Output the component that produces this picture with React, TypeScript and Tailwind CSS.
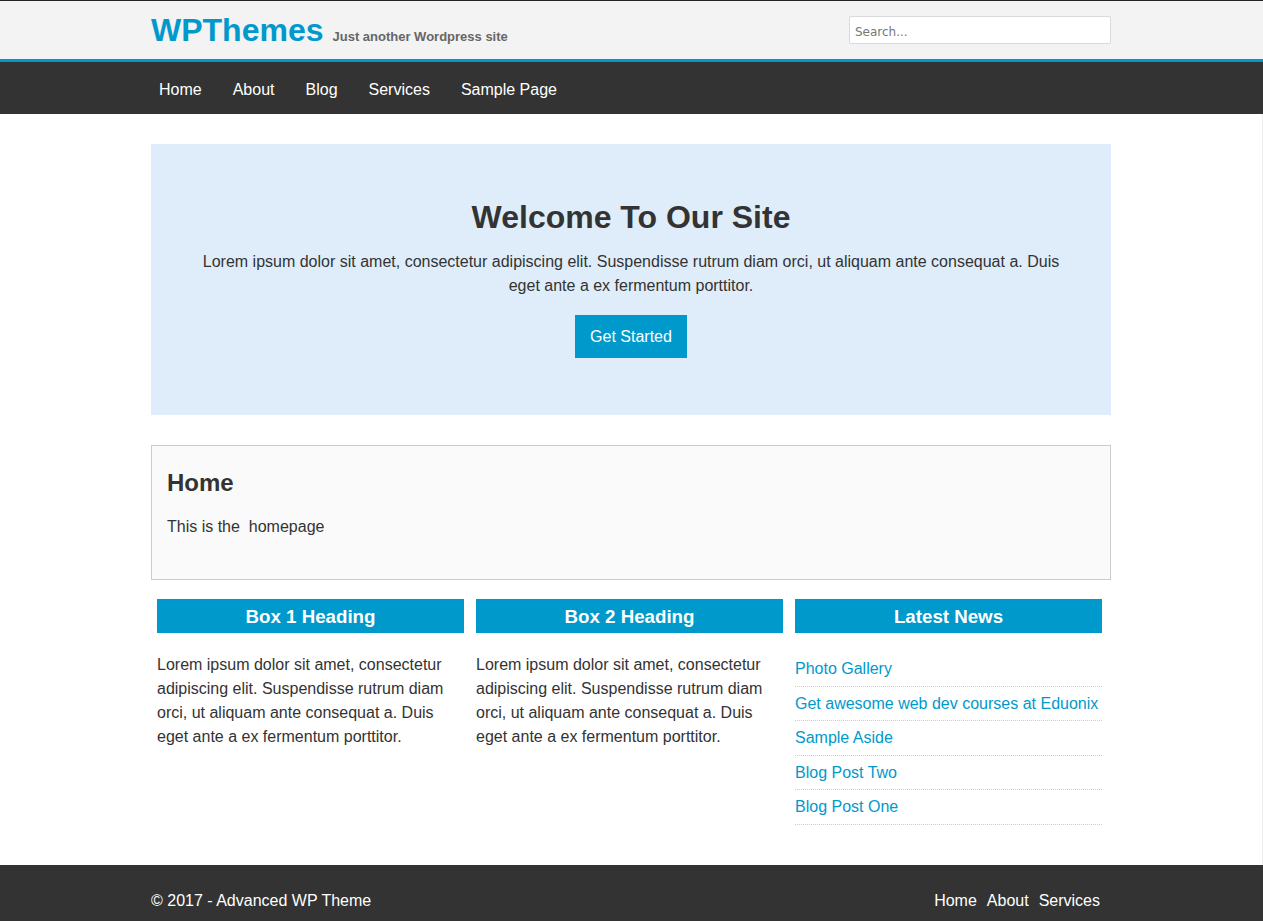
import React from "react";

const navLinks = ["Home", "About", "Blog", "Services", "Sample Page"];
const newsLinks = [
  "Photo Gallery",
  "Get awesome web dev courses at Eduonix",
  "Sample Aside",
  "Blog Post Two",
  "Blog Post One",
];
const lorem =
  "Lorem ipsum dolor sit amet, consectetur adipiscing elit. Suspendisse rutrum diam orci, ut aliquam ante consequat a. Duis eget ante a ex fermentum porttitor.";

export default function App() {
  return (
    <div className="min-h-screen bg-white text-[#333] font-['Liberation_Sans',Arial,sans-serif]">
      {/* Header */}
      <header className="border-t border-t-[#222] border-b-[3px] border-b-[#0099cc] bg-[#f3f3f3] pr-px">
        <div className="mx-auto flex h-[58px] w-[960px] items-center justify-between">
          <div className="flex items-baseline">
            <h1 className="text-[32px] font-bold leading-[37px] text-[#0099cc]">WPThemes</h1>
            <span className="ml-[9px] text-[13px] font-bold text-[#666]">Just another Wordpress site</span>
          </div>
          <input
            type="text"
            placeholder="Search..."
            className="h-[28px] w-[262px] rounded-[2px] border border-[#d9d9de] bg-white px-[5px] pt-[3px] font-['DejaVu_Sans',Verdana,sans-serif] text-[12px] text-[#555] placeholder:text-[#777] outline-none"
          />
        </div>
      </header>

      {/* Navegação */}
      <nav className="h-[52px] bg-[#333] pr-px">
        <ul className="mx-auto flex h-full w-[960px] items-center gap-[15px] pt-[3px]">
          {navLinks.map((link) => (
            <li key={link}>
              <a href="#" className="px-2 text-[16px] text-white">
                {link}
              </a>
            </li>
          ))}
        </ul>
      </nav>

      <div className="border-r border-[#eee]">
        <main className="mx-auto w-[960px] pt-[30px]">
          {/* Showcase */}
          <section className="bg-[#dfedfa] px-[50px] pt-[55px] pb-[57px] text-center">
            <h1 className="text-[32px] font-bold leading-[37px] text-[#333]">Welcome To Our Site</h1>
            <p className="mt-[14px] text-[16px] leading-6">{lorem}</p>
            <button className="mt-[17px] h-[43px] bg-[#0099cc] px-[15px] text-[16px] text-white">
              Get Started
            </button>
          </section>

          {/* Conteúdo principal */}
          <article className="mt-[30px] border border-[#ccc] bg-[#fafafa] px-[15px] pt-[23px] pb-[40px]">
            <h2 className="text-[24px] font-bold leading-[28px]">Home</h2>
            <p className="mt-[18px] text-[16px] leading-6">{"This is the\u00a0 homepage"}</p>
          </article>

          {/* Boxes */}
          <div className="flex gap-[12px] pl-[6px] pt-[19px] pb-[40px]">
            {["Box 1 Heading", "Box 2 Heading"].map((title) => (
              <div key={title} className="w-[307px]">
                <h3 className="h-[34px] bg-[#0099cc] pt-px text-center text-[18.72px] font-bold leading-[34px] text-white">
                  {title}
                </h3>
                <p className="mt-5 text-[16px] leading-6">{lorem}</p>
              </div>
            ))}
            <div className="w-[307px]">
              <h3 className="h-[34px] bg-[#0099cc] pt-px text-center text-[18.72px] font-bold leading-[34px] text-white">
                Latest News
              </h3>
              <ul className="mt-[19px]">
                {newsLinks.map((item) => (
                  <li key={item} className="border-b border-dotted border-[#ccc] py-2 leading-[17.5px]">
                    <a href="#" className="text-[16px] text-[#0099cc]">
                      {item}
                    </a>
                  </li>
                ))}
              </ul>
            </div>
          </div>
        </main>
      </div>

      {/* Rodapé */}
      <footer className="bg-[#333] pt-[27px] pb-[27px] pr-px text-white">
        <div className="mx-auto flex w-[960px] items-center justify-between pr-[11px] text-[16px] leading-[18px]">
          <p>© 2017 - Advanced WP Theme</p>
          <ul className="flex gap-[10px]">
            <li>Home</li>
            <li>About</li>
            <li>Services</li>
          </ul>
        </div>
      </footer>
    </div>
  );
}
